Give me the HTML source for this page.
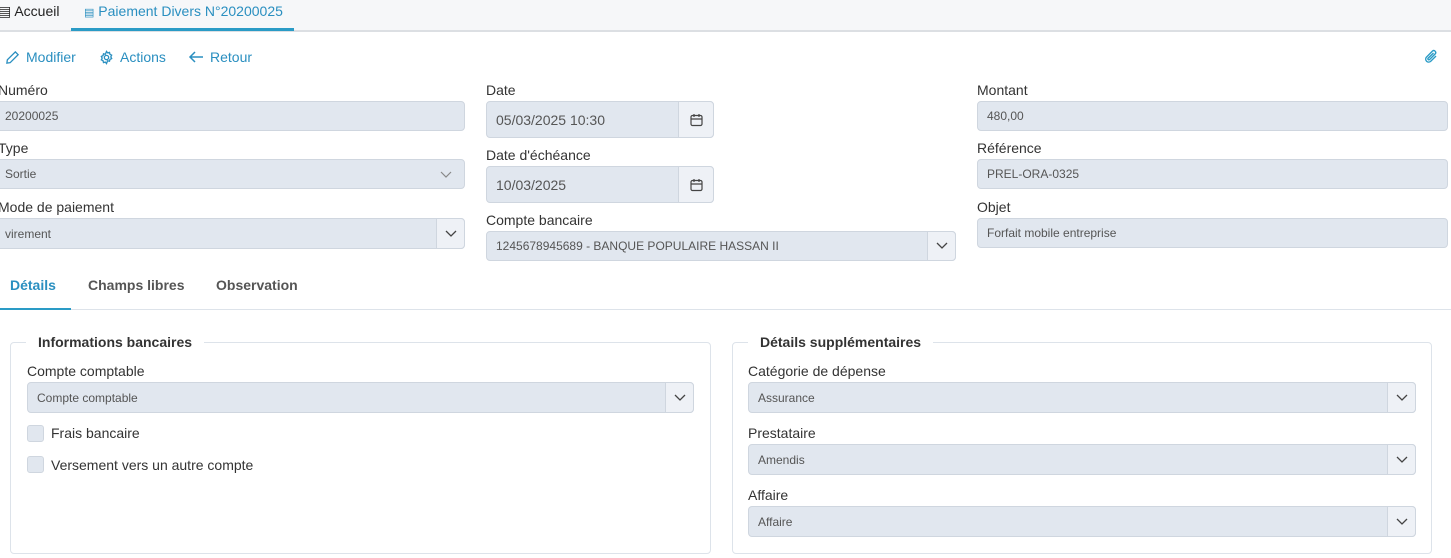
<!DOCTYPE html>
<html><head><style>
*{box-sizing:border-box;margin:0;padding:0}
body{width:1451px;height:558px;overflow:hidden;background:#fff;font-family:"Liberation Sans",sans-serif;color:#333;position:relative}
.a{position:absolute}
.lbl{position:absolute;font-size:14px;color:#333;margin-top:-1px}
.inp{position:absolute;background:#e1e7ef;border:1px solid #cfd6df;border-radius:4px;font-size:12px;color:#555;padding-left:9px;display:flex;align-items:center}
.btn{position:absolute;top:-1px;right:-1px;bottom:-1px;width:29px;border:1px solid #cfd6df;border-radius:0 4px 4px 0;background:#eef1f6;display:flex;align-items:center;justify-content:center}
.cal{width:36px}
.fs{position:absolute;border:1px solid #dde3ea;border-radius:4px}
.leg{position:absolute;top:-9px;background:#fff;padding:0 12px;font-weight:bold;font-size:14px;color:#333}
.cb{position:absolute;width:17px;height:17px;border:1px solid #cfd6df;background:#e1e7ef;border-radius:3px}
.tool{position:absolute;top:49px;font-size:14px;color:#2a8fc0;display:flex;align-items:center;gap:6px}
</style></head><body>
<div class="a" style="left:0;top:0;width:1451px;height:32px;background:#f6f7f9;border-bottom:2px solid #dcdfe3"></div>
<div class="a" style="left:71px;top:0;width:223px;height:31px;border-bottom:3px solid #2a9bc6"></div>
<div class="a" style="left:-2px;top:3px;font-size:14px;color:#222">▤ Accueil</div>
<div class="a" style="left:84px;top:3px;font-size:14px;color:#2a8fc0"><span style="font-size:11px">▤</span> Paiement Divers N°20200025</div>

<div class="tool" style="left:5px"><svg width="15" height="15" viewBox="0 0 16 16" fill="none" stroke="#2a8fc0" stroke-width="1.4"><path d="M11 2l3 3-8.5 8.5L2 14l.5-3.5z"/></svg>Modifier</div>
<div class="tool" style="left:99px"><svg width="15" height="15" viewBox="0 0 16 16" fill="none" stroke="#2a8fc0" stroke-width="1.4"><circle cx="8" cy="8" r="2.3"/><path d="M8 1.5l1.2 1.6 2-.5.5 2 1.8.9-.9 1.8.9 1.8-1.8.9-.5 2-2-.5L8 14.5l-1.2-1.6-2 .5-.5-2-1.8-.9.9-1.8-.9-1.8 1.8-.9.5-2 2 .5z"/></svg>Actions</div>
<div class="tool" style="left:188px"><svg width="16" height="14" viewBox="0 0 16 14" fill="none" stroke="#2a8fc0" stroke-width="1.5"><path d="M15 7H2M7 2L2 7l5 5"/></svg>Retour</div>
<svg class="a" style="left:1423px;top:49px" width="16" height="16" viewBox="0 0 16 16" fill="none" stroke="#2a9bc6" stroke-width="1.4"><path d="M13 7l-5.5 5.5a3 3 0 01-4.2-4.2L9.5 2a2 2 0 012.8 2.8L6.5 10.6a1 1 0 01-1.4-1.4L10.5 4"/></svg>

<div class="lbl" style="left:-2px;top:83px">Numéro</div>
<div class="inp" style="left:-5px;top:101px;width:470px;height:30px">20200025</div>
<div class="lbl" style="left:-2px;top:141px">Type</div>
<div class="inp" style="left:-5px;top:159px;width:470px;height:30px">Sortie<svg class="a" style="right:12px;top:11px" width="12" height="8" viewBox="0 0 12 8" fill="none" stroke="#888" stroke-width="1.2"><path d="M1 1l5 5 5-5"/></svg></div>
<div class="lbl" style="left:-2px;top:200px">Mode de paiement</div>
<div class="inp" style="left:-5px;top:218px;width:470px;height:31px">virement<div class="btn"><svg width="12" height="8" viewBox="0 0 12 8" fill="none" stroke="#444" stroke-width="1.3"><path d="M1 1l5 5 5-5"/></svg></div></div>

<div class="lbl" style="left:486px;top:83px">Date</div>
<div class="inp" style="left:486px;top:101px;width:228px;height:37px;font-size:14px">05/03/2025 10:30<div class="btn cal"><svg width="13" height="14" viewBox="0 0 13 14" fill="none" stroke="#444" stroke-width="1.2"><rect x="1" y="2.5" width="11" height="10" rx="1.5"/><path d="M1 6h11M4 1v3M9 1v3"/></svg></div></div>
<div class="lbl" style="left:486px;top:148px">Date d'échéance</div>
<div class="inp" style="left:486px;top:166px;width:228px;height:37px;font-size:14px">10/03/2025<div class="btn cal"><svg width="13" height="14" viewBox="0 0 13 14" fill="none" stroke="#444" stroke-width="1.2"><rect x="1" y="2.5" width="11" height="10" rx="1.5"/><path d="M1 6h11M4 1v3M9 1v3"/></svg></div></div>
<div class="lbl" style="left:486px;top:213px">Compte bancaire</div>
<div class="inp" style="left:486px;top:231px;width:470px;height:30px">1245678945689 - BANQUE POPULAIRE HASSAN II<div class="btn"><svg width="12" height="8" viewBox="0 0 12 8" fill="none" stroke="#444" stroke-width="1.3"><path d="M1 1l5 5 5-5"/></svg></div></div>

<div class="lbl" style="left:977px;top:83px">Montant</div>
<div class="inp" style="left:977px;top:101px;width:471px;height:30px">480,00</div>
<div class="lbl" style="left:977px;top:141px">Référence</div>
<div class="inp" style="left:977px;top:159px;width:471px;height:30px">PREL-ORA-0325</div>
<div class="lbl" style="left:977px;top:200px">Objet</div>
<div class="inp" style="left:977px;top:218px;width:471px;height:30px">Forfait mobile entreprise</div>

<div class="a" style="left:0;top:309px;width:1451px;height:1px;background:#dde3ea"></div>
<div class="a" style="left:0;top:308px;width:71px;height:2px;background:#2a9bc6"></div>
<div class="a" style="left:10px;top:277px;font-size:14px;font-weight:bold;color:#2a8fc0">Détails</div>
<div class="a" style="left:88px;top:277px;font-size:14px;font-weight:bold;color:#555">Champs libres</div>
<div class="a" style="left:216px;top:277px;font-size:14px;font-weight:bold;color:#555">Observation</div>

<div class="fs" style="left:10px;top:342px;width:701px;height:212px"><div class="leg" style="left:15px">Informations bancaires</div></div>
<div class="lbl" style="left:27px;top:364px">Compte comptable</div>
<div class="inp" style="left:27px;top:382px;width:667px;height:31px">Compte comptable<div class="btn"><svg width="12" height="8" viewBox="0 0 12 8" fill="none" stroke="#444" stroke-width="1.3"><path d="M1 1l5 5 5-5"/></svg></div></div>
<div class="cb" style="left:27px;top:425px"></div><div class="lbl" style="left:51px;top:426px">Frais bancaire</div>
<div class="cb" style="left:27px;top:456px"></div><div class="lbl" style="left:51px;top:458px">Versement vers un autre compte</div>

<div class="fs" style="left:732px;top:342px;width:700px;height:212px"><div class="leg" style="left:15px">Détails supplémentaires</div></div>
<div class="lbl" style="left:748px;top:364px">Catégorie de dépense</div>
<div class="inp" style="left:748px;top:382px;width:668px;height:31px">Assurance<div class="btn"><svg width="12" height="8" viewBox="0 0 12 8" fill="none" stroke="#444" stroke-width="1.3"><path d="M1 1l5 5 5-5"/></svg></div></div>
<div class="lbl" style="left:748px;top:426px">Prestataire</div>
<div class="inp" style="left:748px;top:444px;width:668px;height:31px">Amendis<div class="btn"><svg width="12" height="8" viewBox="0 0 12 8" fill="none" stroke="#444" stroke-width="1.3"><path d="M1 1l5 5 5-5"/></svg></div></div>
<div class="lbl" style="left:748px;top:488px">Affaire</div>
<div class="inp" style="left:748px;top:506px;width:668px;height:31px">Affaire<div class="btn"><svg width="12" height="8" viewBox="0 0 12 8" fill="none" stroke="#444" stroke-width="1.3"><path d="M1 1l5 5 5-5"/></svg></div></div>
</body></html>
